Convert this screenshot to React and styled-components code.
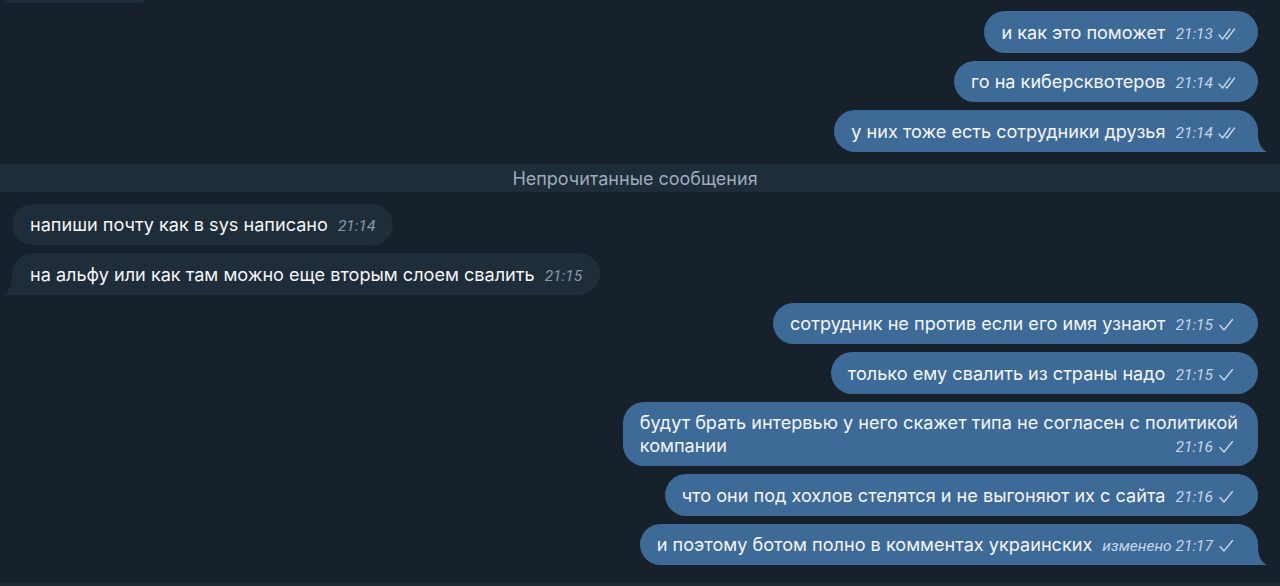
import styled, { createGlobalStyle } from 'styled-components';

const GlobalStyle = createGlobalStyle`
    html, body {
        margin: 0;
        padding: 0;
        background: #17212b;
    }
    body {
        font-family: Inter, "Noto Sans", "Liberation Sans", sans-serif;
        -webkit-font-smoothing: antialiased;
    }
`

const Page = styled.div`
    width: 1280px;
    height: 586px;
    overflow: hidden;
    display: flex;
    flex-direction: column;
    background: #17212b;
`
const History = styled.div`
    flex: 1;
    display: flex;
    flex-direction: column;
    padding: 0 22px 0 12px;
    overflow: hidden;
`
const InputEdge = styled.div`
    height: 3px;
    background: #1e2934;
`
const Row = styled.div`
    display: flex;
    justify-content: ${ ( { out } ) => out ? 'flex-end' : 'flex-start' };
    margin-top: ${ ( { gap } ) => gap ?? 8 }px;
`
const Bubble = styled.div`
    position: relative;
    box-sizing: border-box;
    padding: 9.5px ${ ( { out } ) => out ? 20 : 18 }px 9px ${ ( { out } ) => out ? 17 : 18 }px;
    border-radius: 21px;
    background: ${ ( { out } ) => out ? '#3e6a97' : '#1f2c3a' };
    color: #f4f6f8;
    font-size: 18.1px;
    line-height: 23px;
    white-space: nowrap;
    ${ ( { tail, out } ) => tail && (out ? 'border-bottom-right-radius: 0;' : 'border-bottom-left-radius: 0;') }
`
const Stub = styled(Bubble)`
    width: 145px;
    height: 40px;
    margin-top: -37px;
`
const Line = styled.div``
const LastLine = styled.div`
    display: flex;
    align-items: center;
    justify-content: space-between;
    gap: 10px;
`
const Meta = styled.span`
    display: flex;
    align-items: center;
    gap: 3px;
    padding-top: 3px;
    font-family: Roboto, "Liberation Sans", sans-serif;
    font-size: 15.5px;
    line-height: 20px;
    font-style: italic;
    color: ${ ( { out } ) => out ? '#c3d5e8' : '#8a99aa' };
`
const TailSvg = styled.svg`
    position: absolute;
    bottom: 0;
    ${ ( { out } ) => out ? 'right: -9px;' : 'left: -9px; transform: scaleX(-1);' }
`
const UnreadBar = styled.div`
    margin: 12px -22px 4px -12px;
    height: 28px;
    display: flex;
    align-items: center;
    justify-content: center;
    padding: 2px 10px 0 0;
    box-sizing: border-box;
    background: #1f2c3a;
    color: #9dabba;
    font-size: 18px;
`

const Tail = ( { out } ) => (
    <TailSvg out={out} width="12" height="18" viewBox="0 0 12 18">
        <path d="M0 0 L3 0 C3 9 6 15 12 18 L0 18 Z" fill={out ? '#3e6a97' : '#1f2c3a'} />
    </TailSvg>
)

const Check = ( { double } ) => (
    <svg width="22" height="14" viewBox="0 0 22 14" fill="none" stroke="#c3d5e8" strokeWidth="1.4" strokeLinecap="round" strokeLinejoin="round">
        {double ? (
            <>
                <path d="M3 8 L6.5 12 L14 2" />
                <path d="M10 11 L11 12 L18.5 2" />
            </>
        ) : (
            <path d="M4 7.5 L8 12 L16.5 1.5" />
        )}
    </svg>
)

const messages = [
    { out: true, lines: ['и как это поможет'], time: '21:13', double: true },
    { out: true, lines: ['го на киберсквотеров'], time: '21:14', double: true },
    { out: true, lines: ['у них тоже есть сотрудники друзья'], time: '21:14', double: true, tail: true },
    'unread',
    { out: false, lines: ['напиши почту как в sys написано'], time: '21:14' },
    { out: false, lines: ['на альфу или как там можно еще вторым слоем свалить'], time: '21:15', tail: true },
    { out: true, lines: ['сотрудник не против если его имя узнают'], time: '21:15' },
    { out: true, lines: ['только ему свалить из страны надо'], time: '21:15' },
    { out: true, lines: ['будут брать интервью у него скажет типа не согласен с политикой', 'компании'], time: '21:16' },
    { out: true, lines: ['что они под хохлов стелятся и не выгоняют их с сайта'], time: '21:16' },
    { out: true, lines: ['и поэтому ботом полно в комментах украинских'], time: '21:17', edited: true, tail: true },
]

const App = () => {
    return (
        <Page>
            <GlobalStyle />
            <History>
                <Row gap={0}>
                    <Stub tail>
                        <Tail />
                    </Stub>
                </Row>
                {messages.map( ( m, i ) => m === 'unread' ? (
                    <UnreadBar key={i}>Непрочитанные сообщения</UnreadBar>
                ) : (
                    <Row key={i} out={m.out} gap={i === 0 ? 8 : m.gap}>
                        <Bubble out={m.out} tail={m.tail}>
                            {m.lines.slice(0, -1).map( ( l, j ) => <Line key={j}>{l}</Line> )}
                            <LastLine>
                                <span>{m.lines[m.lines.length - 1]}</span>
                                <Meta out={m.out}>
                                    {m.edited && 'изменено '}{m.time}
                                    {m.out && <Check double={m.double} />}
                                </Meta>
                            </LastLine>
                            {m.tail && <Tail out={m.out} />}
                        </Bubble>
                    </Row>
                ))}
            </History>
            <InputEdge />
        </Page>
    )
}
export default App;
